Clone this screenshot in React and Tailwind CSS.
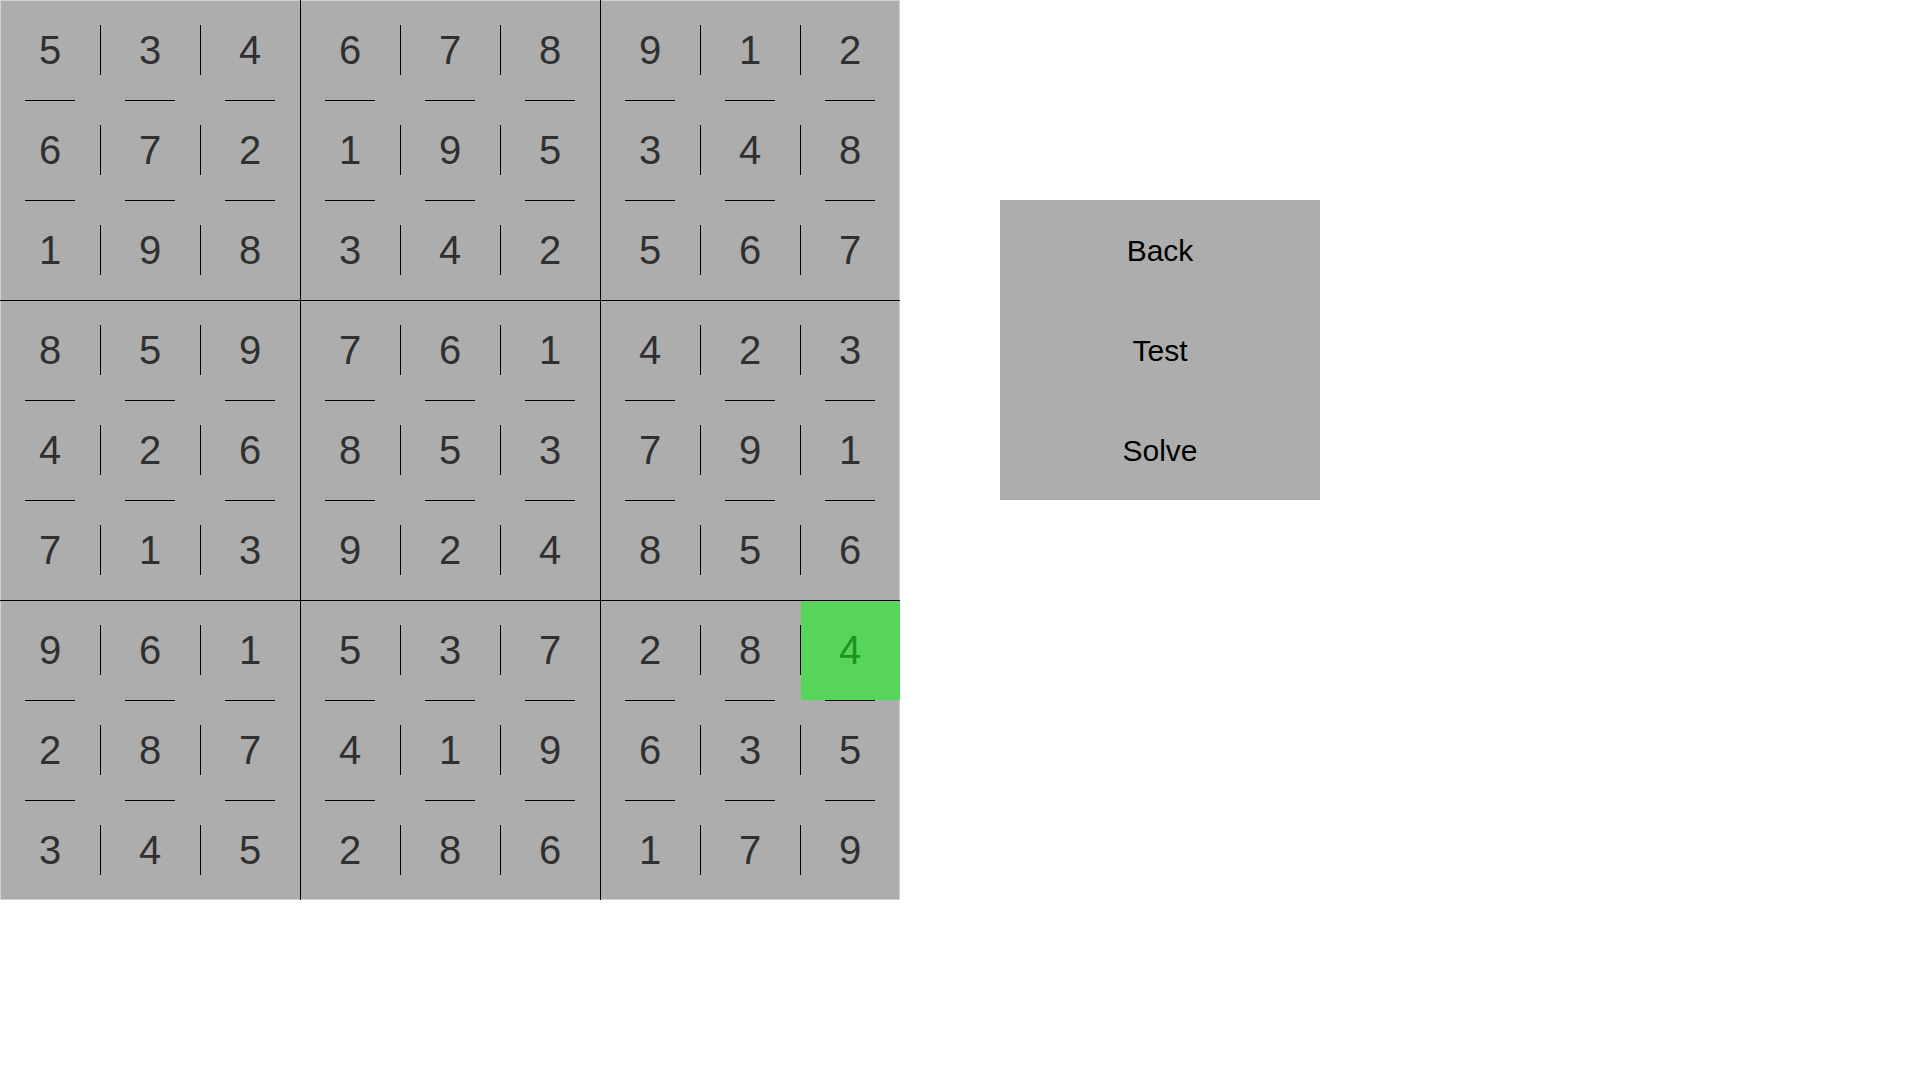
import React from "react";

const board = [
  [5, 3, 4, 6, 7, 8, 9, 1, 2],
  [6, 7, 2, 1, 9, 5, 3, 4, 8],
  [1, 9, 8, 3, 4, 2, 5, 6, 7],
  [8, 5, 9, 7, 6, 1, 4, 2, 3],
  [4, 2, 6, 8, 5, 3, 7, 9, 1],
  [7, 1, 3, 9, 2, 4, 8, 5, 6],
  [9, 6, 1, 5, 3, 7, 2, 8, 4],
  [2, 8, 7, 4, 1, 9, 6, 3, 5],
  [3, 4, 5, 2, 8, 6, 1, 7, 9],
];

function Cell({ value, r, c }) {
  const highlight = r === 6 && c === 8;
  const blockLeft = c === 3 || c === 6;
  const blockTop = r === 3 || r === 6;
  const segLeft = c % 3 !== 0;
  const segTop = r % 3 !== 0;
  return (
    <div className="relative w-[100px] h-[100px] flex items-center justify-center">
      {highlight && (
        <div className="absolute left-[1px] top-[1px] right-0 bottom-0 bg-[#57d55b]" />
      )}
      {blockLeft && (
        <div className="absolute left-0 top-0 w-px h-full bg-black" />
      )}
      {blockTop && (
        <div className="absolute top-0 left-0 h-px w-full bg-black" />
      )}
      {segLeft && (
        <div className="absolute left-0 top-[25px] w-px h-[50px] bg-black" />
      )}
      {segTop && (
        <div className="absolute top-0 left-[25px] h-px w-[50px] bg-black" />
      )}
      <span
        className={
          "relative text-[40px] leading-none " +
          (highlight ? "text-[#1f921f]" : "text-[#303030]")
        }
      >
        {value}
      </span>
    </div>
  );
}

export default function App() {
  return (
    <div
      className="flex items-start gap-[100px] bg-white w-[1920px] h-[1080px]"
      style={{ fontFamily: '"Liberation Sans", Arial, sans-serif' }}
    >
      <div className="grid grid-cols-[repeat(9,100px)] grid-rows-[repeat(9,100px)] w-[900px] h-[900px] bg-[#adadad] shadow-[inset_0_0_0_1px_#d2d2d2]">
        {board.map((row, r) =>
          row.map((v, c) => <Cell key={r + "-" + c} value={v} r={r} c={c} />)
        )}
      </div>
      <div className="mt-[200px] w-[320px] flex flex-col bg-[#adadad]">
        {["Back", "Test", "Solve"].map((t) => (
          <div
            key={t}
            className="h-[100px] flex items-center justify-center text-[30px] text-black"
          >
            {t}
          </div>
        ))}
      </div>
    </div>
  );
}
